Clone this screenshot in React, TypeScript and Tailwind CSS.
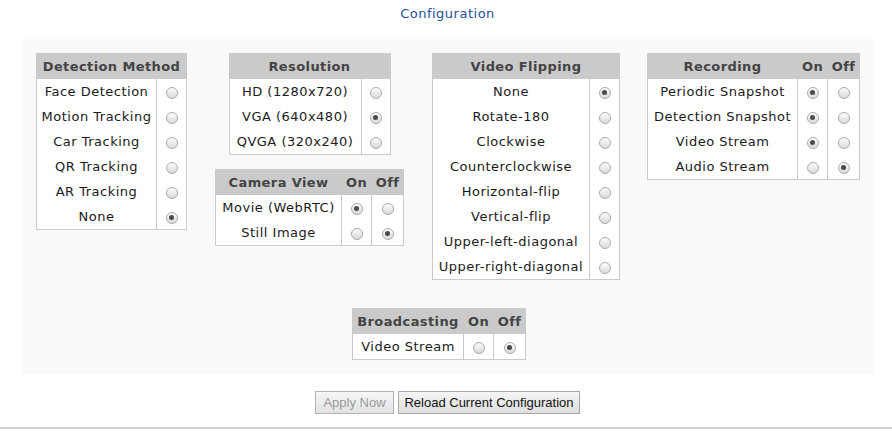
import React from 'react';

type Row = { label: string; values: boolean[] };

interface OptionTableProps {
  title: string;
  cols?: string[];
  labelW: string;
  colW: string[];
  rows: Row[];
  className?: string;
}

const Radio = ({ checked }: { checked: boolean }) => (
  <span className="mt-[2px] inline-flex h-[12px] w-[12px] items-center justify-center rounded-full border border-[#ababab] bg-linear-to-b from-[#fdfdfd] to-[#d9d9d9]">
    {checked && <span className="h-[5px] w-[5px] rounded-full bg-[#4a4a4a]" />}
  </span>
);

// 表の見出しと行（ラジオ列は1列または On/Off の2列）
const OptionTable = ({ title, cols, labelW, colW, rows, className = '' }: OptionTableProps) => (
  <div className={`shrink-0 border border-[#cacaca] bg-white ${className}`}>
    <div className="flex h-[25px] bg-[#cacaca] font-bold tracking-[0.4px] text-[#444]">
      {cols ? (
        <>
          <div className={`${labelW} flex items-center justify-center`}>{title}</div>
          {cols.map((c, i) => (
            <div key={c} className={`${colW[i]} flex items-center justify-center border-l border-[#cacaca]`}>
              {c}
            </div>
          ))}
        </>
      ) : (
        <div className="flex flex-1 items-center justify-center">{title}</div>
      )}
    </div>
    {rows.map((r) => (
      <div key={r.label} className="flex h-[25px]">
        <div className={`${labelW} flex items-center justify-center whitespace-nowrap`}>{r.label}</div>
        {r.values.map((v, i) => (
          <div key={i} className={`${colW[i]} flex items-center justify-center border-l border-[#cacaca]`}>
            <Radio checked={v} />
          </div>
        ))}
      </div>
    ))}
  </div>
);

export default function App() {
  return (
    <div className="w-[892px] bg-white text-[13px] tracking-[0.5px] text-[#1a1a1a] font-['DejaVu_Sans',sans-serif]">
      <div className="flex h-[39px] justify-center pl-[3px] pt-[6px] leading-[16px] text-[#1f4f9e]">Configuration</div>

      <div className="ml-[22px] w-[851px] bg-[#f9f9f9] py-[14px] pl-[14px] pr-[12px]">
        <div className="flex items-start">
          <OptionTable
            title="Detection Method"
            labelW="w-[119px]"
            colW={['w-[30px]']}
            rows={[
              { label: 'Face Detection', values: [false] },
              { label: 'Motion Tracking', values: [false] },
              { label: 'Car Tracking', values: [false] },
              { label: 'QR Tracking', values: [false] },
              { label: 'AR Tracking', values: [false] },
              { label: 'None', values: [true] },
            ]}
          />

          <div className="ml-[28px] flex shrink-0 flex-col items-center gap-[14px]">
            <OptionTable
              title="Resolution"
              labelW="w-[131px]"
              colW={['w-[29px]']}
              rows={[
                { label: 'HD (1280x720)', values: [false] },
                { label: 'VGA (640x480)', values: [true] },
                { label: 'QVGA (320x240)', values: [false] },
              ]}
            />
            <OptionTable
              title="Camera View"
              cols={['On', 'Off']}
              labelW="w-[125px]"
              colW={['w-[30px]', 'w-[32px]']}
              rows={[
                { label: 'Movie (WebRTC)', values: [true, false] },
                { label: 'Still Image', values: [false, true] },
              ]}
            />
          </div>

          <OptionTable
            className="ml-[28px]"
            title="Video Flipping"
            labelW="w-[156px]"
            colW={['w-[30px]']}
            rows={[
              { label: 'None', values: [true] },
              { label: 'Rotate-180', values: [false] },
              { label: 'Clockwise', values: [false] },
              { label: 'Counterclockwise', values: [false] },
              { label: 'Horizontal-flip', values: [false] },
              { label: 'Vertical-flip', values: [false] },
              { label: 'Upper-left-diagonal', values: [false] },
              { label: 'Upper-right-diagonal', values: [false] },
            ]}
          />

          <OptionTable
            className="ml-[27px]"
            title="Recording"
            cols={['On', 'Off']}
            labelW="w-[149px]"
            colW={['w-[30px]', 'w-[32px]']}
            rows={[
              { label: 'Periodic Snapshot', values: [true, false] },
              { label: 'Detection Snapshot', values: [true, false] },
              { label: 'Video Stream', values: [true, false] },
              { label: 'Audio Stream', values: [false, true] },
            ]}
          />
        </div>

        <div className="mt-[28px] flex justify-center pr-[19px]">
          <OptionTable
            title="Broadcasting"
            cols={['On', 'Off']}
            labelW="w-[110px]"
            colW={['w-[30px]', 'w-[32px]']}
            rows={[{ label: 'Video Stream', values: [false, true] }]}
          />
        </div>
      </div>

      <div className="mt-[17px] flex justify-center gap-[4px] pl-[3px] font-['Liberation_Sans',Arial,sans-serif] text-[13px] tracking-normal">
        <button
          disabled
          className="h-[23px] w-[79px] border border-[#b4b4b4] bg-linear-to-b from-[#f6f6f6] to-[#e2e2e2] text-[#9a9a9a]"
        >
          Apply Now
        </button>
        <button className="h-[23px] w-[182px] whitespace-nowrap border border-[#a8a8a8] bg-linear-to-b from-[#f6f6f6] to-[#dedede] text-[#111]">
          Reload Current Configuration
        </button>
      </div>

      <div className="mt-[13px] h-[2px] bg-[#d2d2d2]" />
    </div>
  );
}
